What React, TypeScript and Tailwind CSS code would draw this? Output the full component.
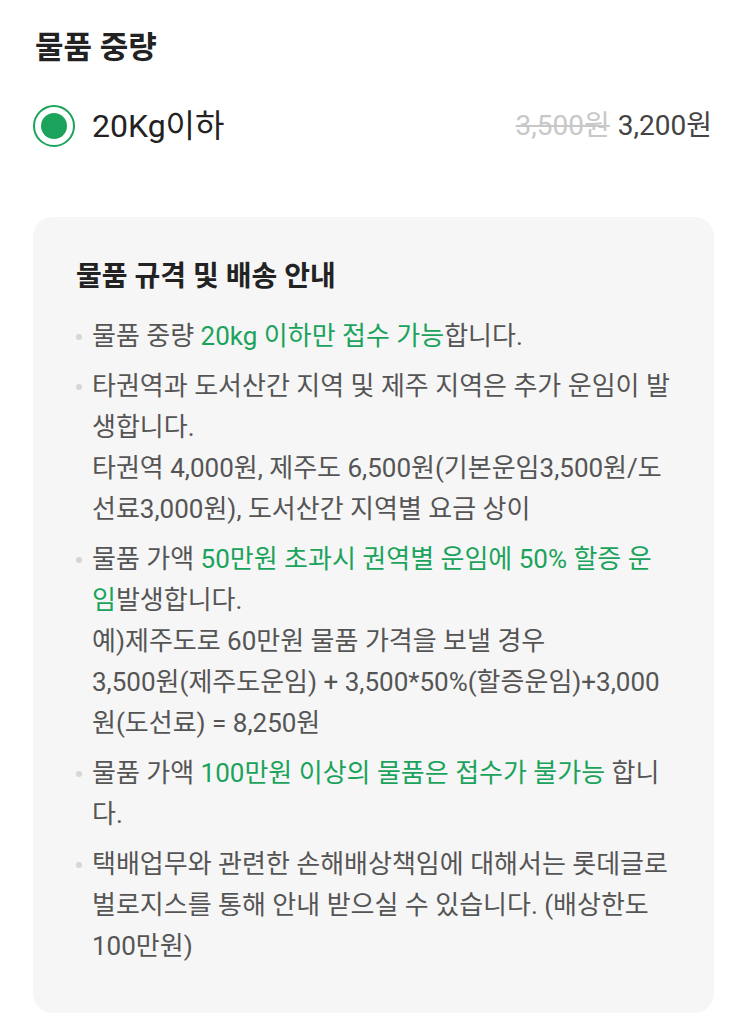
import React from "react";

const G = ({ children }: { children: React.ReactNode }) => (
  <span className="text-[#1ba35c]">{children}</span>
);

const L = ({ children }: { children: React.ReactNode }) => (
  <span className="block whitespace-nowrap">{children}</span>
);

const Item = ({ children }: { children: React.ReactNode }) => (
  <li className="relative pl-[16px]">
    <span className="absolute left-0 top-[18px] h-[6px] w-[6px] rounded-full bg-[#d6d6d6]" />
    {children}
  </li>
);

export default function App() {
  return (
    <div
      className="min-h-[1024px] w-[747px] bg-white"
      style={{ fontFamily: 'Roboto, "Noto Sans CJK KR", sans-serif' }}
    >
      <div className="px-[35px] pt-[28px]">
        <h1 className="text-[31px] font-bold leading-[40px] text-[#222]">물품 중량</h1>
      </div>
      <div className="mt-[37px] flex items-center justify-between pl-[33px] pr-[35px]">
        <div className="flex items-center">
          <div className="flex h-[42px] w-[42px] items-center justify-center rounded-full border-[2.5px] border-[#1ba35c]">
            <div className="h-[26px] w-[26px] rounded-full bg-[#1ba35c]" />
          </div>
          <span className="ml-[17px] text-[32px] leading-[40px] text-[#222]">20Kg이하</span>
        </div>
        <div className="flex items-center text-[28px] leading-[40px]">
          <span className="text-[#c8c8c8] line-through decoration-[2px]">3,500원</span>
          <span className="ml-[8px] text-[#444]">3,200원</span>
        </div>
      </div>
      <div className="mx-[33px] mt-[70px] rounded-[20px] bg-[#f6f6f6] pb-[46px] pl-[43px] pr-[38px] pt-[40px]">
        <h2 className="text-[28px] font-bold leading-[40px] text-[#222]">물품 규격 및 배송 안내</h2>
        <ul className="mt-[19px] flex flex-col gap-[9px] text-[26px] leading-[41px] text-[#555]">
          <Item>
            <L>
              물품 중량 <G>20kg 이하만 접수 가능</G>합니다.
            </L>
          </Item>
          <Item>
            <L>타권역과 도서산간 지역 및 제주 지역은 추가 운임이 발</L>
            <L>생합니다.</L>
            <L>타권역 4,000원, 제주도 6,500원(기본운임3,500원/도</L>
            <L>선료3,000원), 도서산간 지역별 요금 상이</L>
          </Item>
          <Item>
            <L>
              물품 가액 <G>50만원 초과시 권역별 운임에 50% 할증 운</G>
            </L>
            <L>
              <G>임</G>발생합니다.
            </L>
            <L>예)제주도로 60만원 물품 가격을 보낼 경우</L>
            <L>3,500원(제주도운임) + 3,500*50%(할증운임)+3,000</L>
            <L>원(도선료) = 8,250원</L>
          </Item>
          <Item>
            <L>
              물품 가액 <G>100만원 이상의 물품은 접수가 불가능</G> 합니
            </L>
            <L>다.</L>
          </Item>
          <Item>
            <L>택배업무와 관련한 손해배상책임에 대해서는 롯데글로</L>
            <L>벌로지스를 통해 안내 받으실 수 있습니다. (배상한도</L>
            <L>100만원)</L>
          </Item>
        </ul>
      </div>
    </div>
  );
}
